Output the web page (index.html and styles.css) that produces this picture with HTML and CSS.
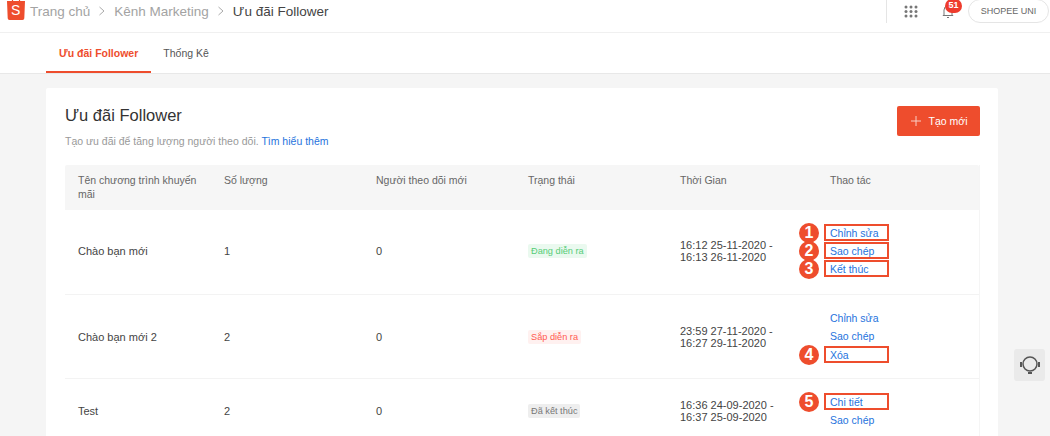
FILE: index.html
```html
<!DOCTYPE html>
<html lang="vi">
<head>
<meta charset="utf-8">
<title>Ưu đãi Follower</title>
<link rel="stylesheet" href="styles.css">
</head>
<body>
<header class="topbar">
  <nav class="crumbs">
    <svg class="logo" width="18" height="20" viewBox="0 0 18 20"><path d="M5.5 1V0M12.5 1V0" stroke="#ee4d2d" stroke-width="1.2"/><path d="M0 1h18l-.7 17.2a1.8 1.8 0 0 1-1.8 1.8H2.5a1.8 1.8 0 0 1-1.8-1.8z" fill="#ee4d2d"/></svg>
    <span class="logo-s">S</span>
    <span class="crumb">Trang chủ</span>
    <svg class="chev" width="8" height="10" viewBox="0 0 8 10"><path d="M1.5 1l4.5 4-4.5 4" fill="none" stroke="#aaa" stroke-width="1"/></svg>
    <span class="crumb">Kênh Marketing</span>
    <svg class="chev" width="8" height="10" viewBox="0 0 8 10"><path d="M1.5 1l4.5 4-4.5 4" fill="none" stroke="#aaa" stroke-width="1"/></svg>
    <span class="crumb current">Ưu đãi Follower</span>
  </nav>
  <div class="tools">
    <span class="divider"></span>
    <svg class="apps" width="14" height="13" viewBox="0 0 14 13" fill="#777"><circle cx="2" cy="2" r="1.5"/><circle cx="7" cy="2" r="1.5"/><circle cx="12" cy="2" r="1.5"/><circle cx="2" cy="6.5" r="1.5"/><circle cx="7" cy="6.5" r="1.5"/><circle cx="12" cy="6.5" r="1.5"/><circle cx="2" cy="11" r="1.5"/><circle cx="7" cy="11" r="1.5"/><circle cx="12" cy="11" r="1.5"/></svg>
    <span class="bell-wrap">
      <svg width="12" height="13" viewBox="0 0 12 13" fill="none" stroke="#777" stroke-width="1"><path d="M2 10V5a4 4 0 0 1 8 0v5M.8 10.5h10.4M5 12.5h2"/></svg>
      <span class="bell-badge">51</span>
    </span>
    <span class="uni">SHOPEE UNI</span>
  </div>
</header>

<div class="tabs">
  <span class="tab active">Ưu đãi Follower</span>
  <span class="tab">Thống Kê</span>
</div>

<main class="content">
  <section class="card">
    <div class="card-head">
      <div>
        <h1 class="title">Ưu đãi Follower</h1>
        <p class="sub">Tạo ưu đãi để tăng lượng người theo dõi. <a class="link">Tìm hiểu thêm</a></p>
      </div>
      <button class="create"><svg width="10" height="10" viewBox="0 0 10 10"><path d="M5 0v10M0 5h10" stroke="#f9cfc5" stroke-width="1"/></svg>Tạo mới</button>
    </div>
    <div class="table">
      <div class="row head">
        <div>Tên chương trình khuyến mãi</div><div>Số lượng</div><div>Người theo dõi mới</div><div>Trạng thái</div><div>Thời Gian</div><div>Thao tác</div>
      </div>
      <div class="row body first">
        <div>Chào bạn mới</div><div>1</div><div>0</div>
        <div><span class="tag green">Đang diễn ra</span></div>
        <div>16:12 25-11-2020 -<br>16:13 26-11-2020</div>
        <div class="actions">
          <a class="link act boxed"><i class="num">1</i>Chỉnh sửa</a>
          <a class="link act boxed"><i class="num">2</i>Sao chép</a>
          <a class="link act boxed"><i class="num">3</i>Kết thúc</a>
        </div>
      </div>
      <div class="row body">
        <div>Chào bạn mới 2</div><div>2</div><div>0</div>
        <div><span class="tag red">Sắp diễn ra</span></div>
        <div>23:59 27-11-2020 -<br>16:27 29-11-2020</div>
        <div class="actions">
          <a class="link act">Chỉnh sửa</a>
          <a class="link act">Sao chép</a>
          <a class="link act boxed"><i class="num">4</i>Xóa</a>
        </div>
      </div>
      <div class="row body last">
        <div>Test</div><div>2</div><div>0</div>
        <div><span class="tag grey">Đã kết thúc</span></div>
        <div>16:36 24-09-2020 -<br>16:37 25-09-2020</div>
        <div class="actions">
          <a class="link act boxed"><i class="num">5</i>Chi tiết</a>
          <a class="link act">Sao chép</a>
        </div>
      </div>
    </div>
  </section>
</main>

<button class="support" aria-label="Hỗ trợ">
  <svg width="22" height="20" viewBox="0 0 22 20" fill="none" stroke="#555"><circle cx="11" cy="9" r="7" stroke-width="1.5"/><path d="M2 7v5M20 7v5" stroke-width="2"/><path d="M9 18h4" stroke-width="2"/></svg>
</button>
</body>
</html>
```
FILE: styles.css
```css
*, *::before { box-sizing: border-box; }
html, body { margin: 0; height: 436px; overflow: hidden; }
body { background: #f5f5f5; font-family: "Liberation Sans", Arial, sans-serif; color: #333; font-size: 11px; }

.topbar { height: 33px; background: #fff; border-bottom: 1px solid #f0f0f0; display: flex; justify-content: space-between; align-items: flex-start; padding-left: 7px; }
.crumbs { display: flex; align-items: center; height: 22px; position: relative; }
.logo { position: relative; top: -1px; margin-right: 5px; }
.logo-s { position: absolute; left: 4px; top: 2px; color: #fff; font-size: 14px; line-height: 17px; }
.crumb { font-size: 13.5px; color: #a3a3a3; }
.crumb.current { color: #444; }
.chev { margin: 0 8px; }

.tools { display: flex; align-items: flex-start; }
.divider { width: 1px; height: 23px; background: #e5e5e5; margin-right: 17px; }
.apps { margin-top: 5px; margin-right: 24px; }
.bell-wrap { position: relative; margin-top: 5px; margin-right: 14px; width: 12px; }
.bell-badge { position: absolute; left: 3px; top: -6px; width: 17px; height: 14px; border-radius: 8px; background: #ee3c2d; color: #fff; font-size: 9px; font-weight: bold; line-height: 13px; text-align: center; }
.uni { width: 81px; height: 24px; margin-right: 1px; margin-top: -1px; border: 1px solid #e5e5e5; border-radius: 12px; font-size: 9px; line-height: 23px; text-align: center; color: #666; }

.tabs { height: 41px; background: #fff; border-bottom: 1px solid #e8e8e8; padding-left: 46px; display: flex; }
.tab { height: 40px; line-height: 40px; font-size: 10.5px; color: #555; padding: 0 12px; }
.tab.active { color: #ee4d2d; font-weight: bold; border-bottom: 2px solid #ee4d2d; padding: 0 13px; }

.content { padding: 14px 52px 0 46px; }
.card { background: #fff; border-radius: 2px; padding: 17px 18px 0 19px; }
.card-head { display: flex; justify-content: space-between; align-items: flex-start; height: 60px; }
.title { margin: 0; font-size: 16.5px; font-weight: normal; line-height: 20px; color: #333; }
.sub { margin: 9px 0 0; font-size: 10.5px; line-height: 14px; color: #999; }
.link { color: #2673dd; }
.create { height: 30px; width: 83px; margin-top: 1px; background: #ee4d2d; border: 0; border-radius: 2px; color: #fff; font: 10.5px "Liberation Sans", Arial, sans-serif; display: flex; align-items: center; justify-content: center; gap: 8px; padding: 0 0 0 1px; }

.table { border-right: 1px solid #f5f5f5; }
.row { display: grid; grid-template-columns: 146px 152px 152px 152px 150px 1fr; }
.row > div { padding-left: 13px; }
.head { height: 45px; background: #f6f6f6; color: #666; font-size: 10.5px; line-height: 14px; padding-top: 8px; border-radius: 2px 2px 0 0; }
.head > div { padding-right: 8px; }
.body { height: 84px; border-bottom: 1px solid #f3f3f3; align-items: center; color: #444; line-height: 12px; }
.body.first { height: 85px; padding-bottom: 2px; }
.body.last { height: 64px; border-bottom: 0; }

.tag { display: inline-block; height: 14px; line-height: 14px; padding: 0 3px; font-size: 9.2px; border-radius: 2px; }
.green { background: #eaf9ef; color: #55cc77; }
.red { background: #fff1f0; color: #ff5a4f; }
.grey { background: #eee; color: #777; }

.actions { display: flex; flex-direction: column; }
.act { display: block; height: 18.3px; line-height: 18px; position: relative; width: fit-content; font-size: 10.5px; }
.boxed::before { content: ""; position: absolute; left: -6px; top: 0; width: 65px; height: 17px; border: 2px solid #ee4d2d; }
.num { position: absolute; left: -31px; top: -1px; width: 20px; height: 20px; border-radius: 50%; background: #ee4d2d; color: #fff; font: bold 16px/20px "Liberation Sans", Arial, sans-serif; text-align: center; }

.support { position: fixed; right: 5px; top: 349px; width: 31px; height: 32px; border: 0; padding: 0; background: #eaeaea; border-radius: 3px; display: flex; align-items: center; justify-content: center; }
```
